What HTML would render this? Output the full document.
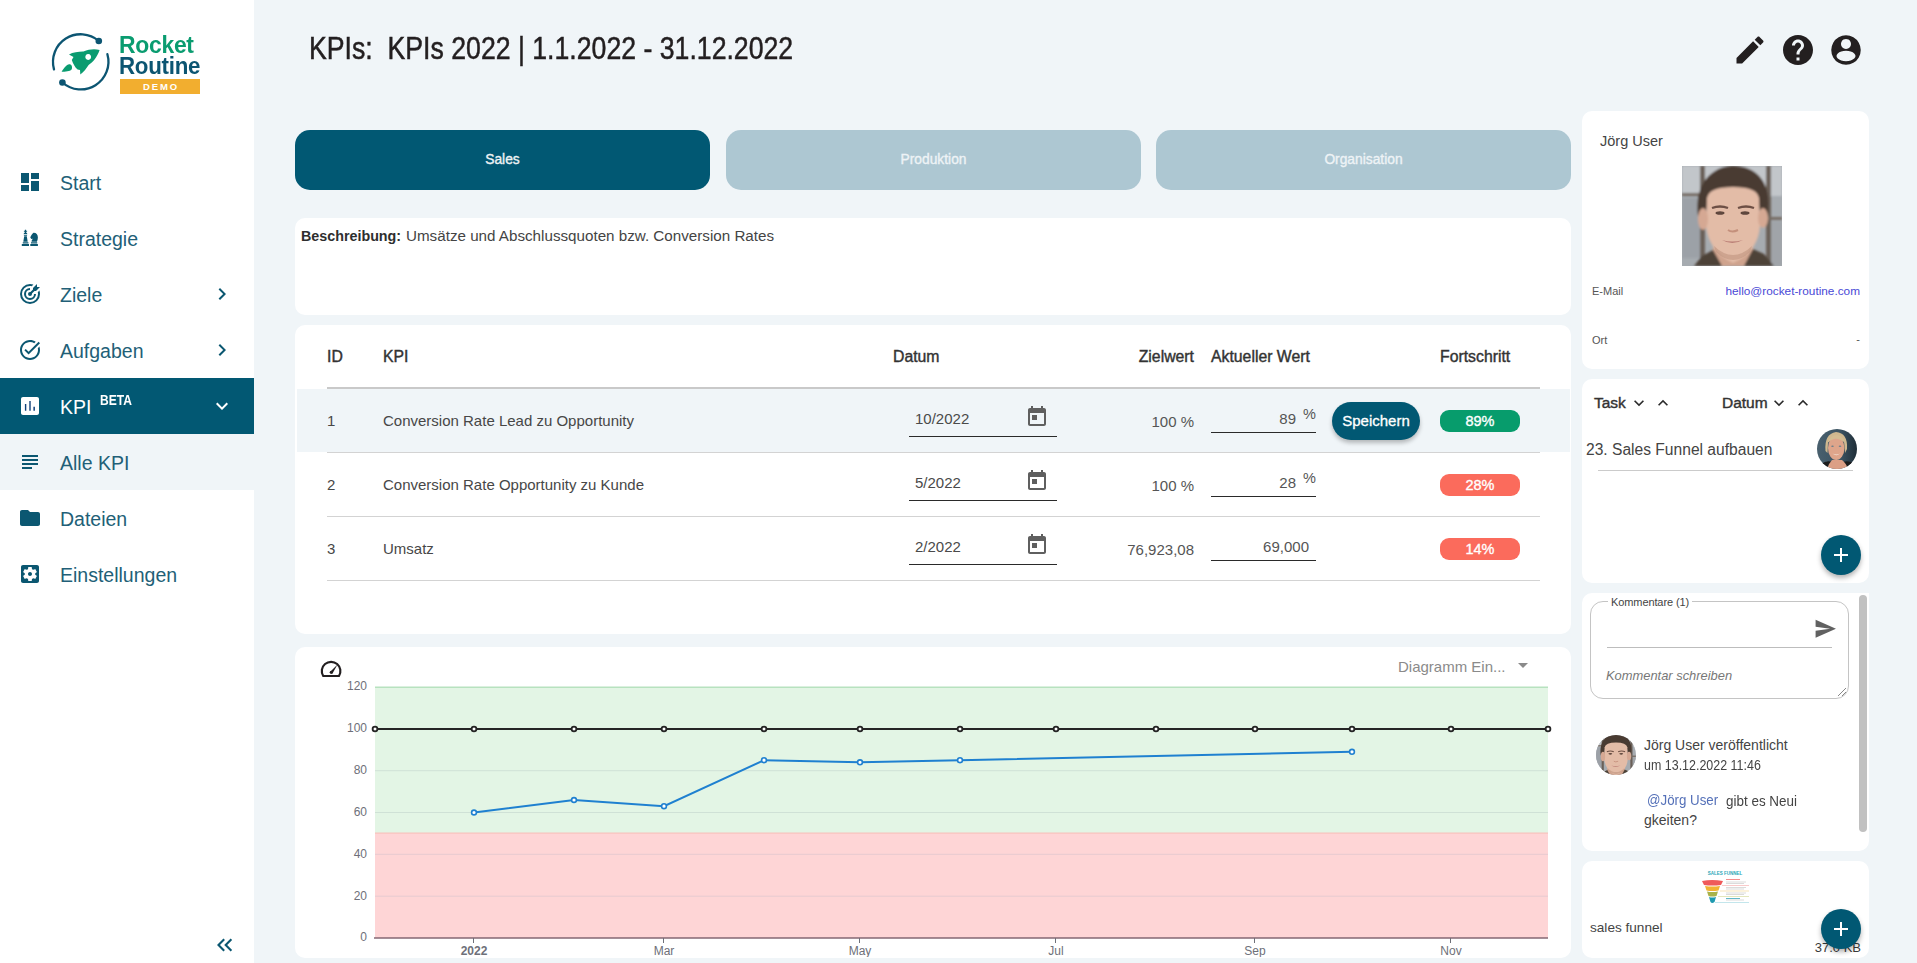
<!DOCTYPE html>
<html><head><meta charset="utf-8">
<style>
*{box-sizing:border-box;margin:0;padding:0}
html,body{width:1917px;height:963px;overflow:hidden}
body{background:#f0f5f8;font-family:"Liberation Sans",sans-serif;position:relative;color:#231f20}
.a{position:absolute}
.side{left:0;top:0;width:254px;height:963px;background:#fff}
.mi{position:absolute;left:0;width:254px;height:56px}
.mi svg{position:absolute;left:18px;top:16px;width:24px;height:24px;fill:#0b5771}
.mi .t{position:absolute;left:60px;top:1px;line-height:56px;font-size:19.5px;color:#225f77;white-space:nowrap}
.mi .chev{position:absolute;left:210px;top:16px;width:24px;height:24px}
.card{position:absolute;background:#fff;border-radius:10px}
.tab{position:absolute;top:130px;height:60px;width:415px;border-radius:15px;background:#adc7d2;color:#eef3f6;font-size:13.8px;-webkit-text-stroke:0.35px currentColor;text-align:center;line-height:60px}
.tab.on{background:#015873;color:#eef3f5}

.tx{position:absolute;white-space:nowrap;line-height:20px;height:20px}
.th{font-size:15.8px;color:#333;-webkit-text-stroke:0.4px #333}
.td{font-size:15px;color:#474747}
.r{text-align:right}
.hl{position:absolute;height:1px;background:#d3d3d3}
.badge{position:absolute;left:1440px;width:80px;height:22px;border-radius:9px;color:#fff;font-size:14.5px;-webkit-text-stroke:0.35px #fff;text-align:center;line-height:22px}
.uline{position:absolute;height:1px;background:#2a2a2a}
.cal{position:absolute;width:24px;height:24px;fill:#5f5f5f}
</style></head><body>
<div class="a side">
<svg class="a" style="left:45px;top:28px" width="80" height="70" viewBox="0 0 80 70">
<g fill="none" stroke="#0c5572" stroke-width="2.3" stroke-linecap="round">
<path d="M9 41.4 A27.7 27.7 0 0 1 53.8 13"/>
<path d="M62.4 26.2 A27.7 27.7 0 0 1 17.4 54.5"/>
</g>
<circle cx="53.8" cy="13" r="3.3" fill="#0c5572"/>
<circle cx="17.4" cy="54.5" r="3.3" fill="#0c5572"/>
<path fill="#0a9c70" fill-rule="evenodd" d="M54.6 22 C50 20.5 44 21 38.5 23.6 C34 23.5 28 24.5 24 26.4 L28.5 29 L26.8 32 C28 35.5 30 39.5 32.6 41.6 L35 42 L35.3 46.6 C38.5 44 41.5 40.5 43.6 37 C48 34 52 29.5 54.6 22 Z M43.2 26.1 a2.9 2.9 0 1 0 0.01 0 Z"/>
<path fill="#0a9c70" d="M16.6 43.7 C19 40 21.5 36.5 24.2 36.3 C26.5 36.2 27.5 38.5 26.8 41 C26 43 22 43.8 16.6 43.7 Z"/>
</svg>
<div class="a" style="left:119px;top:30px;font-size:24px;line-height:29px;font-weight:bold;color:#0a9c70;transform:scaleX(0.955);transform-origin:0 0;letter-spacing:-0.3px">Rocket</div>
<div class="a" style="left:119px;top:52px;font-size:24px;line-height:28px;font-weight:bold;color:#0c5572;transform:scaleX(0.93);transform-origin:0 0;letter-spacing:-0.3px">Routine</div>
<div class="a" style="left:120px;top:79px;width:80px;height:15px;background:#f2ae2f;color:#fff;font-size:9.5px;font-weight:bold;letter-spacing:1.9px;text-align:center;line-height:15px;padding-left:2px">DEMO</div>

<div class="mi" style="top:154px"><svg viewBox="0 0 24 24"><path d="M3 13h8V3H3v10zm0 8h8v-6H3v6zm10 0h8V11h-8v10zm0-18v6h8V3h-8z"/></svg><div class="t">Start</div></div>
<div class="mi" style="top:210px"><svg viewBox="0 0 24 24"><path d="M6.9 3.8h1.2v1h1v1h-1v.6c.8.3 1.3 1 1.2 1.9H5.7c-.1-.9.4-1.6 1.2-1.9v-.6h-1v-1h1zM6 8.9h3l.2.8H5.8zM6.2 10.3h2.6l.9 5.4H5.3zM4.8 16.2h5.6v1.2H4.8zM3.8 18h7.2v2H3.8zM15.5 6.8c2.5-.2 4.4 1.8 4.4 4.6 0 1.6-.5 3-1 4.3h-5.3c-.1-1.3.6-2.3 1.5-3l-1.8.3-1-1.4c.5-1.9 1.7-3.6 3.2-4.8zM13 16.2h6.2v1.2H13zM12.3 18h7.6v2h-7.6z"/></svg><div class="t">Strategie</div></div>
<div class="mi" style="top:266px"><svg viewBox="0 0 24 24"><path d="M12,2A10,10 0 0,0 2,12A10,10 0 0,0 12,22A10,10 0 0,0 22,12C22,10.84 21.79,9.69 21.39,8.61L19.79,10.21C19.93,10.8 20,11.4 20,12A8,8 0 0,1 12,20A8,8 0 0,1 4,12A8,8 0 0,1 12,4C12.6,4 13.2,4.07 13.79,4.21L15.4,2.6C14.31,2.21 13.16,2 12,2M19,2L15,6V7.5L12.45,10.05C12.3,10 12.15,10 12,10A2,2 0 0,0 10,12A2,2 0 0,0 12,14A2,2 0 0,0 14,12C14,11.85 14,11.7 13.95,11.55L16.5,9H18L22,5H19V2M12,6A6,6 0 0,0 6,12A6,6 0 0,0 12,18A6,6 0 0,0 18,12H16A4,4 0 0,1 12,16A4,4 0 0,1 8,12A4,4 0 0,1 12,8V6Z"/></svg><div class="t">Ziele</div><svg class="chev" style="left:210px" viewBox="0 0 24 24"><path d="M10 6L8.59 7.41 13.17 12l-4.58 4.59L10 18l6-6z"/></svg></div>
<div class="mi" style="top:322px"><svg viewBox="0 0 24 24"><path d="M22,5.18L10.59,16.6l-4.24-4.24l1.41-1.41l2.83,2.83l10-10L22,5.18z M19.79,10.22C19.92,10.79,20,11.39,20,12c0,4.42-3.58,8-8,8s-8-3.58-8-8c0-4.42,3.58-8,8-8c1.58,0,3.04,0.46,4.28,1.25l1.44-1.44C16.1,2.67,14.13,2,12,2C6.48,2,2,6.48,2,12c0,5.52,4.48,10,10,10s10-4.48,10-10c0-1.19-0.22-2.33-0.6-3.39L19.79,10.22z"/></svg><div class="t">Aufgaben</div><svg class="chev" style="left:210px" viewBox="0 0 24 24"><path d="M10 6L8.59 7.41 13.17 12l-4.58 4.59L10 18l6-6z"/></svg></div>
<div class="mi" style="top:378px;background:#025873"><svg viewBox="0 0 24 24" style="fill:#fff"><path d="M19 3H5c-1.1 0-2 .9-2 2v14c0 1.1.9 2 2 2h14c1.1 0 2-.9 2-2V5c0-1.1-.9-2-2-2z"/><path fill="#10417a" d="M6.9 10h1.4v6.8H6.9zM11.3 7h1.4v9.8h-1.4zM15.4 12.7h1.5v4.1h-1.5z"/></svg><div class="t" style="color:#fff">KPI</div><div class="a" style="left:100px;top:15px;font-size:14px;font-weight:bold;color:#fff;line-height:15px;transform:scaleX(0.86);transform-origin:0 0">BETA</div><svg class="chev" style="left:210px;fill:#fff" viewBox="0 0 24 24"><path d="M16.59 8.59L12 13.17 7.41 8.59 6 10l6 6 6-6z"/></svg></div>
<div class="mi" style="top:434px;background:#f0f5f8"><svg viewBox="0 0 24 24"><path d="M14 17H4v2h10v-2zm6-8H4v2h16V9zM4 15h16v-2H4v2zM4 5v2h16V5H4z"/></svg><div class="t">Alle KPI</div></div>
<div class="mi" style="top:490px"><svg viewBox="0 0 24 24"><path d="M10 4H4c-1.1 0-1.99.9-1.99 2L2 18c0 1.1.9 2 2 2h16c1.1 0 2-.9 2-2V8c0-1.1-.9-2-2-2h-8l-2-2z"/></svg><div class="t">Dateien</div></div>
<div class="mi" style="top:546px"><svg viewBox="0 0 24 24"><path d="M12 10c-1.1 0-2 .9-2 2s.9 2 2 2 2-.9 2-2-.9-2-2-2zm7-7H5c-1.11 0-2 .9-2 2v14c0 1.1.89 2 2 2h14c1.11 0 2-.9 2-2V5c0-1.1-.89-2-2-2zm-1.75 9c0 .23-.02.46-.05.68l1.48 1.16c.13.11.17.3.08.45l-1.4 2.42c-.09.15-.27.21-.43.15l-1.74-.7c-.36.28-.76.51-1.18.69l-.26 1.85c-.03.17-.18.3-.35.3h-2.8c-.17 0-.32-.13-.35-.29l-.26-1.850c-.43-.18-.82-.41-1.18-.69l-1.74.7c-.16.06-.34 0-.43-.15l-1.4-2.42c-.09-.15-.05-.34.08-.45l1.48-1.16c-.03-.23-.05-.46-.05-.69 0-.23.02-.46.05-.68l-1.48-1.16c-.13-.11-.17-.3-.08-.45l1.4-2.42c.09-.15.27-.21.43-.15l1.74.7c.36-.28.76-.51 1.180-.69l.26-1.85c.03-.17.18-.3.35-.3h2.8c.17 0 .32.13.35.29l.26 1.85c.43.18.82.41 1.18.69l1.74-.7c.16-.06.34 0 .43.15l1.4 2.42c.09.15.05.34-.08.45l-1.48 1.16c.03.23.05.46.05.69z"/></svg><div class="t">Einstellungen</div></div>
<svg class="a" style="left:210px;top:930px" width="30" height="30" viewBox="210 930 30 30"><path d="M224.2 939.3 L218.5 945 L224.2 950.7 M231.4 939.3 L225.7 945 L231.4 950.7" fill="none" stroke="#0b5771" stroke-width="2.1"/></svg>
</div>
<!-- title -->
<div class="a" id="title" style="left:309px;top:31px;font-size:31px;line-height:36px;white-space:nowrap;color:#231f20;transform:scaleX(0.86);transform-origin:0 0;-webkit-text-stroke:0.5px #231f20">KPIs:&nbsp; KPIs 2022 | 1.1.2022 - 31.12.2022</div>


<svg class="a" style="left:1732px;top:32px;width:36px;height:36px;fill:#231f20" viewBox="0 0 24 24"><path d="M3 17.25V21h3.75L17.81 9.94l-3.75-3.75L3 17.25zM20.71 7.04c.39-.39.39-1.02 0-1.41l-2.34-2.34c-.39-.39-1.020-.39-1.41 0l-1.83 1.83 3.75 3.75 1.83-1.83z"/></svg>
<svg class="a" style="left:1780px;top:32px;width:36px;height:36px;fill:#231f20" viewBox="0 0 24 24"><path d="M12 2C6.48 2 2 6.48 2 12s4.48 10 10 10 10-4.48 10-10S17.52 2 12 2zm1 17h-2v-2h2v2zm2.07-7.75l-.9.92C13.45 12.9 13 13.5 13 15h-2v-.5c0-1.1.45-2.1 1.17-2.83l1.24-1.26c.37-.36.59-.86.59-1.41 0-1.1-.9-2-2-2s-2 .9-2 2H8c0-2.21 1.79-4 4-4s4 1.79 4 4c0 .88-.36 1.68-.93 2.25z"/></svg>
<svg class="a" style="left:1828px;top:32px;width:36px;height:36px" viewBox="0 0 36 36"><path fill="#231f20" fill-rule="evenodd" d="M18 3.25a14.75 14.75 0 1 0 0.001 0zM18 6.9a5 5 0 1 0 0.001 0zM18 18.8a9.5 5.2 0 1 0 0.001 0z"/></svg>
<div class="tab on" style="left:295px">Sales</div>
<div class="tab" style="left:726px">Produktion</div>
<div class="tab" style="left:1156px">Organisation</div>

<div class="card" style="left:295px;top:218px;width:1276px;height:97px"></div>
<div class="card" style="left:295px;top:325px;width:1276px;height:309px"></div>

<div class="tx" style="left:301px;top:226px;font-size:14.3px;font-weight:bold;color:#2e2e2e">Beschreibung:</div><div class="tx" style="left:406px;top:226px;font-size:15.2px;color:#444">Umsätze und Abschlussquoten bzw. Conversion Rates</div>

<div class="tx th" style="left:327px;top:347px">ID</div>
<div class="tx th" style="left:383px;top:347px">KPI</div>
<div class="tx th" style="left:893px;top:347px">Datum</div>
<div class="tx th r" style="left:1094px;width:100px;top:347px">Zielwert</div>
<div class="tx th" style="left:1211px;top:347px">Aktueller Wert</div>
<div class="tx th" style="left:1440px;top:347px">Fortschritt</div>
<div class="a" style="left:327px;top:387px;width:1213px;height:2px;background:#c9c9c9"></div>
<div class="a" style="left:297px;top:389px;width:1273px;height:63px;background:#f0f5f8"></div>
<div class="hl" style="left:327px;top:452px;width:1213px"></div>
<div class="hl" style="left:327px;top:516px;width:1213px"></div>
<div class="hl" style="left:327px;top:580px;width:1213px"></div>

<div class="tx td" style="left:327px;top:411px">1</div>
<div class="tx td" style="left:383px;top:411px">Conversion Rate Lead zu Opportunity</div>
<div class="tx td" style="left:915px;top:409px;color:#4a4a4a">10/2022</div>
<svg class="cal" style="left:1025px;top:405px" viewBox="0 0 24 24"><path d="M19 3h-1V1h-2v2H8V1H6v2H5c-1.11 0-1.99.9-1.99 2L3 19c0 1.1.89 2 2 2h14c1.1 0 2-.9 2-2V5c0-1.1-.9-2-2-2zm0 16H5V8h14v11zM7 10h5v5H7z"/></svg>
<div class="uline" style="left:909px;top:436px;width:148px"></div>
<div class="tx td r" style="left:1094px;width:100px;top:412px;color:#555">100 %</div>
<div class="tx td r" style="left:1196px;width:100px;top:409px;color:#555">89</div>
<div class="tx" style="left:1303px;top:404px;font-size:14.5px;color:#555">%</div>
<div class="uline" style="left:1211px;top:432px;width:105px"></div>
<div class="a" style="left:1332px;top:402px;width:88px;height:38px;border-radius:19px;background:#015873;color:#fff;font-size:15px;-webkit-text-stroke:0.3px #fff;line-height:38px;text-align:center;box-shadow:0 3px 4px rgba(0,0,0,.25)">Speichern</div>
<div class="badge" style="top:410px;background:#079c6c">89%</div>

<div class="tx td" style="left:327px;top:475px">2</div>
<div class="tx td" style="left:383px;top:475px">Conversion Rate Opportunity zu Kunde</div>
<div class="tx td" style="left:915px;top:473px;color:#4a4a4a">5/2022</div>
<svg class="cal" style="left:1025px;top:469px" viewBox="0 0 24 24"><path d="M19 3h-1V1h-2v2H8V1H6v2H5c-1.11 0-1.99.9-1.99 2L3 19c0 1.1.89 2 2 2h14c1.1 0 2-.9 2-2V5c0-1.1-.9-2-2-2zm0 16H5V8h14v11zM7 10h5v5H7z"/></svg>
<div class="uline" style="left:909px;top:500px;width:148px"></div>
<div class="tx td r" style="left:1094px;width:100px;top:476px;color:#555">100 %</div>
<div class="tx td r" style="left:1196px;width:100px;top:473px;color:#555">28</div>
<div class="tx" style="left:1303px;top:468px;font-size:14.5px;color:#555">%</div>
<div class="uline" style="left:1211px;top:496px;width:105px"></div>
<div class="badge" style="top:474px;background:#fb6b5c">28%</div>

<div class="tx td" style="left:327px;top:539px">3</div>
<div class="tx td" style="left:383px;top:539px">Umsatz</div>
<div class="tx td" style="left:915px;top:537px;color:#4a4a4a">2/2022</div>
<svg class="cal" style="left:1025px;top:533px" viewBox="0 0 24 24"><path d="M19 3h-1V1h-2v2H8V1H6v2H5c-1.11 0-1.99.9-1.99 2L3 19c0 1.1.89 2 2 2h14c1.1 0 2-.9 2-2V5c0-1.1-.9-2-2-2zm0 16H5V8h14v11zM7 10h5v5H7z"/></svg>
<div class="uline" style="left:909px;top:564px;width:148px"></div>
<div class="tx td r" style="left:1094px;width:100px;top:540px;color:#555">76,923,08</div>
<div class="tx td r" style="left:1209px;width:100px;top:537px;color:#555">69,000</div>
<div class="uline" style="left:1211px;top:560px;width:105px"></div>
<div class="badge" style="top:538px;background:#fb6b5c">14%</div>
<div class="card" style="left:295px;top:647px;width:1276px;height:311px"></div>
<svg class="a" style="left:295px;top:647px" width="1276" height="310" viewBox="295 647 1276 310">
<rect x="375" y="687" width="1173" height="146" fill="#e3f5e5"/>
<rect x="375" y="833" width="1173" height="105" fill="#fed5d6"/>
<rect x="375" y="686.5" width="1173" height="1.5" fill="#b7e2bf"/>
<rect x="375" y="832.5" width="1173" height="1.2" fill="#f8c2bd"/>
<rect x="375" y="770.2" width="1173" height="1" fill="#cfe1d6"/>
<rect x="375" y="812.0" width="1173" height="1" fill="#cfe1d6"/>
<rect x="375" y="853.8" width="1173" height="1" fill="#e6cad0"/>
<rect x="375" y="895.7" width="1173" height="1" fill="#e6cad0"/>
<rect x="374" y="937.3" width="1174" height="1.4" fill="#7d5f6b"/>
<rect x="473" y="938" width="1" height="5" fill="#6e7079"/>
<rect x="663" y="938" width="1" height="5" fill="#6e7079"/>
<rect x="859" y="938" width="1" height="5" fill="#6e7079"/>
<rect x="1055" y="938" width="1" height="5" fill="#6e7079"/>
<rect x="1254" y="938" width="1" height="5" fill="#6e7079"/>
<rect x="1450" y="938" width="1" height="5" fill="#6e7079"/>
<text x="367" y="690.3" text-anchor="end" font-size="12" fill="#6e7079" font-family="Liberation Sans">120</text>
<text x="367" y="732.1" text-anchor="end" font-size="12" fill="#6e7079" font-family="Liberation Sans">100</text>
<text x="367" y="774.0" text-anchor="end" font-size="12" fill="#6e7079" font-family="Liberation Sans">80</text>
<text x="367" y="815.8" text-anchor="end" font-size="12" fill="#6e7079" font-family="Liberation Sans">60</text>
<text x="367" y="857.6" text-anchor="end" font-size="12" fill="#6e7079" font-family="Liberation Sans">40</text>
<text x="367" y="899.5" text-anchor="end" font-size="12" fill="#6e7079" font-family="Liberation Sans">20</text>
<text x="367" y="941.3" text-anchor="end" font-size="12" fill="#6e7079" font-family="Liberation Sans">0</text>
<text x="474" y="955" text-anchor="middle" font-size="12" fill="#6e7079" font-family="Liberation Sans" font-weight="bold">2022</text>
<text x="664" y="955" text-anchor="middle" font-size="12" fill="#6e7079" font-family="Liberation Sans">Mar</text>
<text x="860" y="955" text-anchor="middle" font-size="12" fill="#6e7079" font-family="Liberation Sans">May</text>
<text x="1056" y="955" text-anchor="middle" font-size="12" fill="#6e7079" font-family="Liberation Sans">Jul</text>
<text x="1255" y="955" text-anchor="middle" font-size="12" fill="#6e7079" font-family="Liberation Sans">Sep</text>
<text x="1451" y="955" text-anchor="middle" font-size="12" fill="#6e7079" font-family="Liberation Sans">Nov</text>
<path d="M375 729 H1548" stroke="#252525" stroke-width="2.1" fill="none"/>
<circle cx="375" cy="729" r="2.4" fill="#fff" stroke="#252525" stroke-width="1.8"/>
<circle cx="474" cy="729" r="2.4" fill="#fff" stroke="#252525" stroke-width="1.8"/>
<circle cx="574" cy="729" r="2.4" fill="#fff" stroke="#252525" stroke-width="1.8"/>
<circle cx="664" cy="729" r="2.4" fill="#fff" stroke="#252525" stroke-width="1.8"/>
<circle cx="764" cy="729" r="2.4" fill="#fff" stroke="#252525" stroke-width="1.8"/>
<circle cx="860" cy="729" r="2.4" fill="#fff" stroke="#252525" stroke-width="1.8"/>
<circle cx="960" cy="729" r="2.4" fill="#fff" stroke="#252525" stroke-width="1.8"/>
<circle cx="1056" cy="729" r="2.4" fill="#fff" stroke="#252525" stroke-width="1.8"/>
<circle cx="1156" cy="729" r="2.4" fill="#fff" stroke="#252525" stroke-width="1.8"/>
<circle cx="1255" cy="729" r="2.4" fill="#fff" stroke="#252525" stroke-width="1.8"/>
<circle cx="1352" cy="729" r="2.4" fill="#fff" stroke="#252525" stroke-width="1.8"/>
<circle cx="1451" cy="729" r="2.4" fill="#fff" stroke="#252525" stroke-width="1.8"/>
<circle cx="1548" cy="729" r="2.4" fill="#fff" stroke="#252525" stroke-width="1.8"/>
<polyline points="474,812.5 574,800.0 664,806.2 764,760.2 860,762.3 960,760.2 1352,751.8" stroke="#1f80d0" stroke-width="2" fill="none"/>
<circle cx="474" cy="812.5" r="2.4" fill="#fff" stroke="#1f80d0" stroke-width="1.6"/>
<circle cx="574" cy="800.0" r="2.4" fill="#fff" stroke="#1f80d0" stroke-width="1.6"/>
<circle cx="664" cy="806.2" r="2.4" fill="#fff" stroke="#1f80d0" stroke-width="1.6"/>
<circle cx="764" cy="760.2" r="2.4" fill="#fff" stroke="#1f80d0" stroke-width="1.6"/>
<circle cx="860" cy="762.3" r="2.4" fill="#fff" stroke="#1f80d0" stroke-width="1.6"/>
<circle cx="960" cy="760.2" r="2.4" fill="#fff" stroke="#1f80d0" stroke-width="1.6"/>
<circle cx="1352" cy="751.8" r="2.4" fill="#fff" stroke="#1f80d0" stroke-width="1.6"/>
<g fill="none" stroke="#231f20" stroke-width="2.2"><path d="M323.2 676 A9.3 9.3 0 1 1 339 676 Z" stroke-linejoin="round"/></g>
<path d="M330 672 L337.5 664.5 L332.5 673.5 Z" fill="#231f20"/><circle cx="331.3" cy="672.3" r="1.6" fill="#231f20"/>
<text x="1398" y="671.5" font-size="15" fill="#8a8a8a" font-family="Liberation Sans">Diagramm Ein...</text>
<path d="M1518 663 h10 l-5 5 z" fill="#8a8a8a"/>
</svg>

<div class="card" style="left:1582px;top:111px;width:287px;height:258px"></div>
<div class="card" style="left:1582px;top:379px;width:287px;height:204px"></div>
<div class="card" style="left:1582px;top:593px;width:287px;height:258px;border-top-right-radius:0"></div>
<div class="card" style="left:1582px;top:861px;width:287px;height:97px"></div>

<div class="tx" style="left:1600px;top:131px;font-size:14.5px;color:#444">Jörg User</div>

<svg class="a" style="left:1682px;top:166px" width="100" height="100" viewBox="0 0 100 100">
<defs><filter id="bl" x="-10%" y="-10%" width="120%" height="120%"><feGaussianBlur stdDeviation="1.3"/></filter>
<filter id="bl2" x="-10%" y="-10%" width="120%" height="120%"><feGaussianBlur stdDeviation="0.7"/></filter></defs>
<g id="manface"><rect width="100" height="100" fill="#a6abb0"/>
<g filter="url(#bl)">
<rect x="0" y="0" width="100" height="30" fill="#c2c6ca"/>
<rect x="0" y="32" width="18" height="60" fill="#9ca1a7"/>
<rect x="86" y="55" width="14" height="45" fill="#a0a4a9"/>
<rect x="18" y="0" width="5" height="100" fill="#6a6058"/>
<rect x="84" y="0" width="5" height="100" fill="#6a6058"/>
<rect x="0" y="27" width="18" height="3" fill="#766c64"/>
<rect x="86" y="51" width="14" height="3" fill="#766c64"/>
<path d="M32 76 L70 76 L74 100 L28 100 Z" fill="#cfa38d"/><path d="M12 100 L20 90 L31 84 L40 100 Z" fill="#4e4239"/><path d="M62 100 L71 83 L82 88 L92 100 Z" fill="#4e4239"/>
<path d="M16 50 C12 18 30 0 51 0 C76 0 90 18 86 48 L78 50 L76 30 L26 30 L24 50 Z" fill="#4a3a30"/>
<path d="M25 32 Q27 21 51 21 Q75 21 77 32 L78 60 Q76 86 51 97 Q27 86 24 60 Z" fill="#e3bca7"/>
<ellipse cx="21" cy="53" rx="5" ry="11" fill="#d5a893"/>
<ellipse cx="81" cy="52" rx="5" ry="10" fill="#d5a893"/>
</g>
<g filter="url(#bl2)">
<path d="M30 42 Q38 39 46 42" stroke="#6d5044" stroke-width="2.4" fill="none"/>
<path d="M56 42 Q64 39 72 42" stroke="#6d5044" stroke-width="2.4" fill="none"/>
<ellipse cx="38" cy="47" rx="4.5" ry="1.8" fill="#5e463c"/>
<ellipse cx="63" cy="47" rx="4.5" ry="1.8" fill="#5e463c"/>
<path d="M46 64 Q50 67 56 64" stroke="#c4907c" stroke-width="2" fill="none"/>
<path d="M40 74 Q50 77 61 74 Q50 80 40 74 Z" fill="#bb7f76"/>
<path d="M32 80 Q51 98 70 80 L68 86 Q51 102 34 86 Z" fill="#b98d78" opacity=".5"/>
</g>
</g></svg>
<div class="tx" style="left:1592px;top:281px;font-size:11px;color:#555">E-Mail</div>
<div class="tx r" style="left:1660px;width:200px;top:281px;font-size:11.8px;color:#4949d6">hello@rocket-routine.com</div>
<div class="tx" style="left:1592px;top:330px;font-size:11px;color:#555">Ort</div>
<div class="tx r" style="left:1760px;width:100px;top:329px;font-size:11px;color:#555">-</div>

<div class="tx" style="left:1594px;top:393px;font-size:15.5px;color:#333;-webkit-text-stroke:0.4px #333">Task</div>
<svg class="a" style="left:1629px;top:393px;width:20px;height:20px;fill:#2b2b2b" viewBox="0 0 24 24"><path d="M7.41 8.59L12 13.17l4.59-4.58L18 10l-6 6-6-6 1.41-1.41z"/></svg>
<svg class="a" style="left:1653px;top:393px;width:20px;height:20px;fill:#2b2b2b" viewBox="0 0 24 24"><path d="M7.41 15.41L12 10.83l4.59 4.58L18 14l-6-6-6 6z"/></svg>
<div class="tx" style="left:1722px;top:393px;font-size:15.5px;color:#333;-webkit-text-stroke:0.4px #333">Datum</div>
<svg class="a" style="left:1769px;top:393px;width:20px;height:20px;fill:#2b2b2b" viewBox="0 0 24 24"><path d="M7.41 8.59L12 13.17l4.59-4.58L18 10l-6 6-6-6 1.41-1.41z"/></svg>
<svg class="a" style="left:1793px;top:393px;width:20px;height:20px;fill:#2b2b2b" viewBox="0 0 24 24"><path d="M7.41 15.41L12 10.83l4.59 4.58L18 14l-6-6-6 6z"/></svg>
<div class="tx" style="left:1586px;top:440px;font-size:15.6px;color:#444">23. Sales Funnel aufbauen</div>
<svg class="a" style="left:1817px;top:429px" width="40" height="40" viewBox="0 0 40 40">
<defs><clipPath id="cw"><circle cx="20" cy="20" r="20"/></clipPath><linearGradient id="gw" x1="0" x2="1"><stop offset="0" stop-color="#49606e"/><stop offset=".6" stop-color="#3a5261"/><stop offset="1" stop-color="#1f2e38"/></linearGradient></defs>
<g clip-path="url(#cw)"><rect width="40" height="40" fill="url(#gw)"/>
<g filter="url(#bl2)">
<path d="M0 40 L4 35 Q10 31 15 33 L26 33 Q32 31 38 35 L40 40 Z" fill="#1b1b1b"/>
<path d="M10 40 Q12 34 15 31 L25 31 Q29 34 31 40 Z" fill="#dc9f85"/>
<path d="M8.5 22 Q7 5 19 3 Q31 4 30 20 L28 24 L27 12 Q19 8 11 13 L10.5 24 Z" fill="#cfb88f"/>
<ellipse cx="19.2" cy="19" rx="8.2" ry="12" fill="#dea58b"/>
<path d="M10.5 14 Q13 6 20 6 Q27 7 28 14 Q22 9 17 10 Q13 11 10.5 14Z" fill="#d4bc92"/>
<ellipse cx="15.5" cy="17.3" rx="1.3" ry=".7" fill="#6b7f8a"/>
<ellipse cx="23" cy="17.3" rx="1.3" ry=".7" fill="#6b7f8a"/>
<path d="M15.5 24.5 Q19.3 26.5 23 24.5 Q19.3 28 15.5 24.5Z" fill="#f3e4da"/>
</g></g></svg>
<div class="a" style="left:1598px;top:469.5px;width:255px;height:1.5px;background:#cbcbcb"></div>
<div class="a" style="left:1821px;top:534.5px;width:40px;height:40px;border-radius:50%;background:#015873;box-shadow:0 3px 5px rgba(0,0,0,.3)"><svg style="position:absolute;left:8px;top:8px;width:24px;height:24px;fill:#fff" viewBox="0 0 24 24"><path d="M19 13h-6v6h-2v-6H5v-2h6V5h2v6h6v2z"/></svg></div>

<div class="a" style="left:1590px;top:601px;width:259px;height:98px;border:1px solid #c4c4c4;border-radius:13px"></div>
<div class="a" style="left:1608px;top:595px;height:14px;padding:0 3px;background:#fff;font-size:11px;letter-spacing:-0.1px;line-height:14px;color:#444;white-space:nowrap">Kommentare (1)</div>
<svg class="a" style="left:1812px;top:617px;width:24px;height:24px;fill:#616161" viewBox="0 0 24 24"><path d="M2.01 21L23 12 2.01 3 2 10l15 2-15 2z" transform="translate(1.65 -0.2) scale(.97 1)"/></svg>
<div class="a" style="left:1607px;top:646.5px;width:225px;height:1.2px;background:#bdbdbd"></div>
<div class="tx" style="left:1606px;top:666px;font-size:12.9px;font-style:italic;color:#777">Kommentar schreiben</div>
<svg class="a" style="left:1836px;top:686px" width="11" height="11" viewBox="0 0 11 11"><path d="M10 2 L2 10 M10 6 L6 10" stroke="#888" stroke-width="1"/></svg>
<div class="a" style="left:1859px;top:595px;width:8px;height:237px;border-radius:4px;background:#c1c1c1"></div>

<svg class="a" style="left:1596px;top:735px" width="40" height="40" viewBox="0 0 40 40"><defs><clipPath id="cm"><circle cx="20" cy="20" r="20"/></clipPath></defs><g clip-path="url(#cm)"><g transform="translate(-2.2 -1.6) scale(.435)"><use href="#manface"/></g></g></svg>
<div class="tx" style="left:1644px;top:735px;font-size:14px;color:#444">Jörg User veröffentlicht</div>
<div class="tx" style="left:1644px;top:755px;font-size:14px;color:#444;transform:scaleX(0.89);transform-origin:0 0">um 13.12.2022 11:46</div>
<div class="tx" style="left:1647px;top:790px;font-size:14px;color:#5470b8;transform:scaleX(0.95);transform-origin:0 0">@Jörg User</div>
<div class="tx" style="left:1726px;top:791px;font-size:14px;color:#444;transform:scaleX(0.96);transform-origin:0 0">gibt es Neui</div>
<div class="tx" style="left:1644px;top:810px;font-size:14px;color:#444">gkeiten?</div>

<svg class="a" style="left:1700px;top:870px" width="50" height="36" viewBox="0 0 50 36">
<text x="25" y="5" font-size="4.5" font-weight="bold" fill="#2aa7b8" text-anchor="middle" font-family="Liberation Sans">SALES FUNNEL</text>
<path d="M2 11 Q12 9 23 11 L21 15 Q12 16 4 15 Z" fill="#ef5a5a"/>
<path d="M5 16 Q12 17 20 16 L18.5 20.5 Q12 21.5 6.5 20.5 Z" fill="#f2b233"/>
<path d="M7 21.5 Q12 22.5 18 21.5 L16.5 26 Q12 27 8.5 26 Z" fill="#a9b34a"/>
<path d="M9 27 Q12 28 16 27 L14.5 32 Q12 34 10.5 32 Z" fill="#1e9ab0"/>
<g stroke-width=".7"><path d="M26 9.5h14" stroke="#ef5a5a"/><path d="M26 12h20M26 13.5h18" stroke="#ccc"/><path d="M22 15.5h27" stroke="#f7b3b3"/>
<path d="M26 17.5h20M26 19h18" stroke="#ccc"/><path d="M20 21h29" stroke="#f3d89a"/>
<path d="M26 23h20M26 24.5h18" stroke="#ccc"/><path d="M18 26.5h31" stroke="#d7dc9f"/>
<path d="M26 28.5h14" stroke="#1e9ab0"/><path d="M26 30h18" stroke="#ccc"/><path d="M15 32.5h34" stroke="#a9dbe4"/></g>
</svg>
<div class="tx" style="left:1590px;top:918px;font-size:13.6px;color:#444">sales funnel</div>
<div class="tx r" style="left:1760px;width:101px;top:938px;font-size:13px;color:#3a3a3a">37.0 KB</div>
<div class="a" style="left:1821px;top:909px;width:40px;height:40px;border-radius:50%;background:#015873;box-shadow:0 3px 5px rgba(0,0,0,.3)"><svg style="position:absolute;left:8px;top:8px;width:24px;height:24px;fill:#fff" viewBox="0 0 24 24"><path d="M19 13h-6v6h-2v-6H5v-2h6V5h2v6h6v2z"/></svg></div>
</body></html>
